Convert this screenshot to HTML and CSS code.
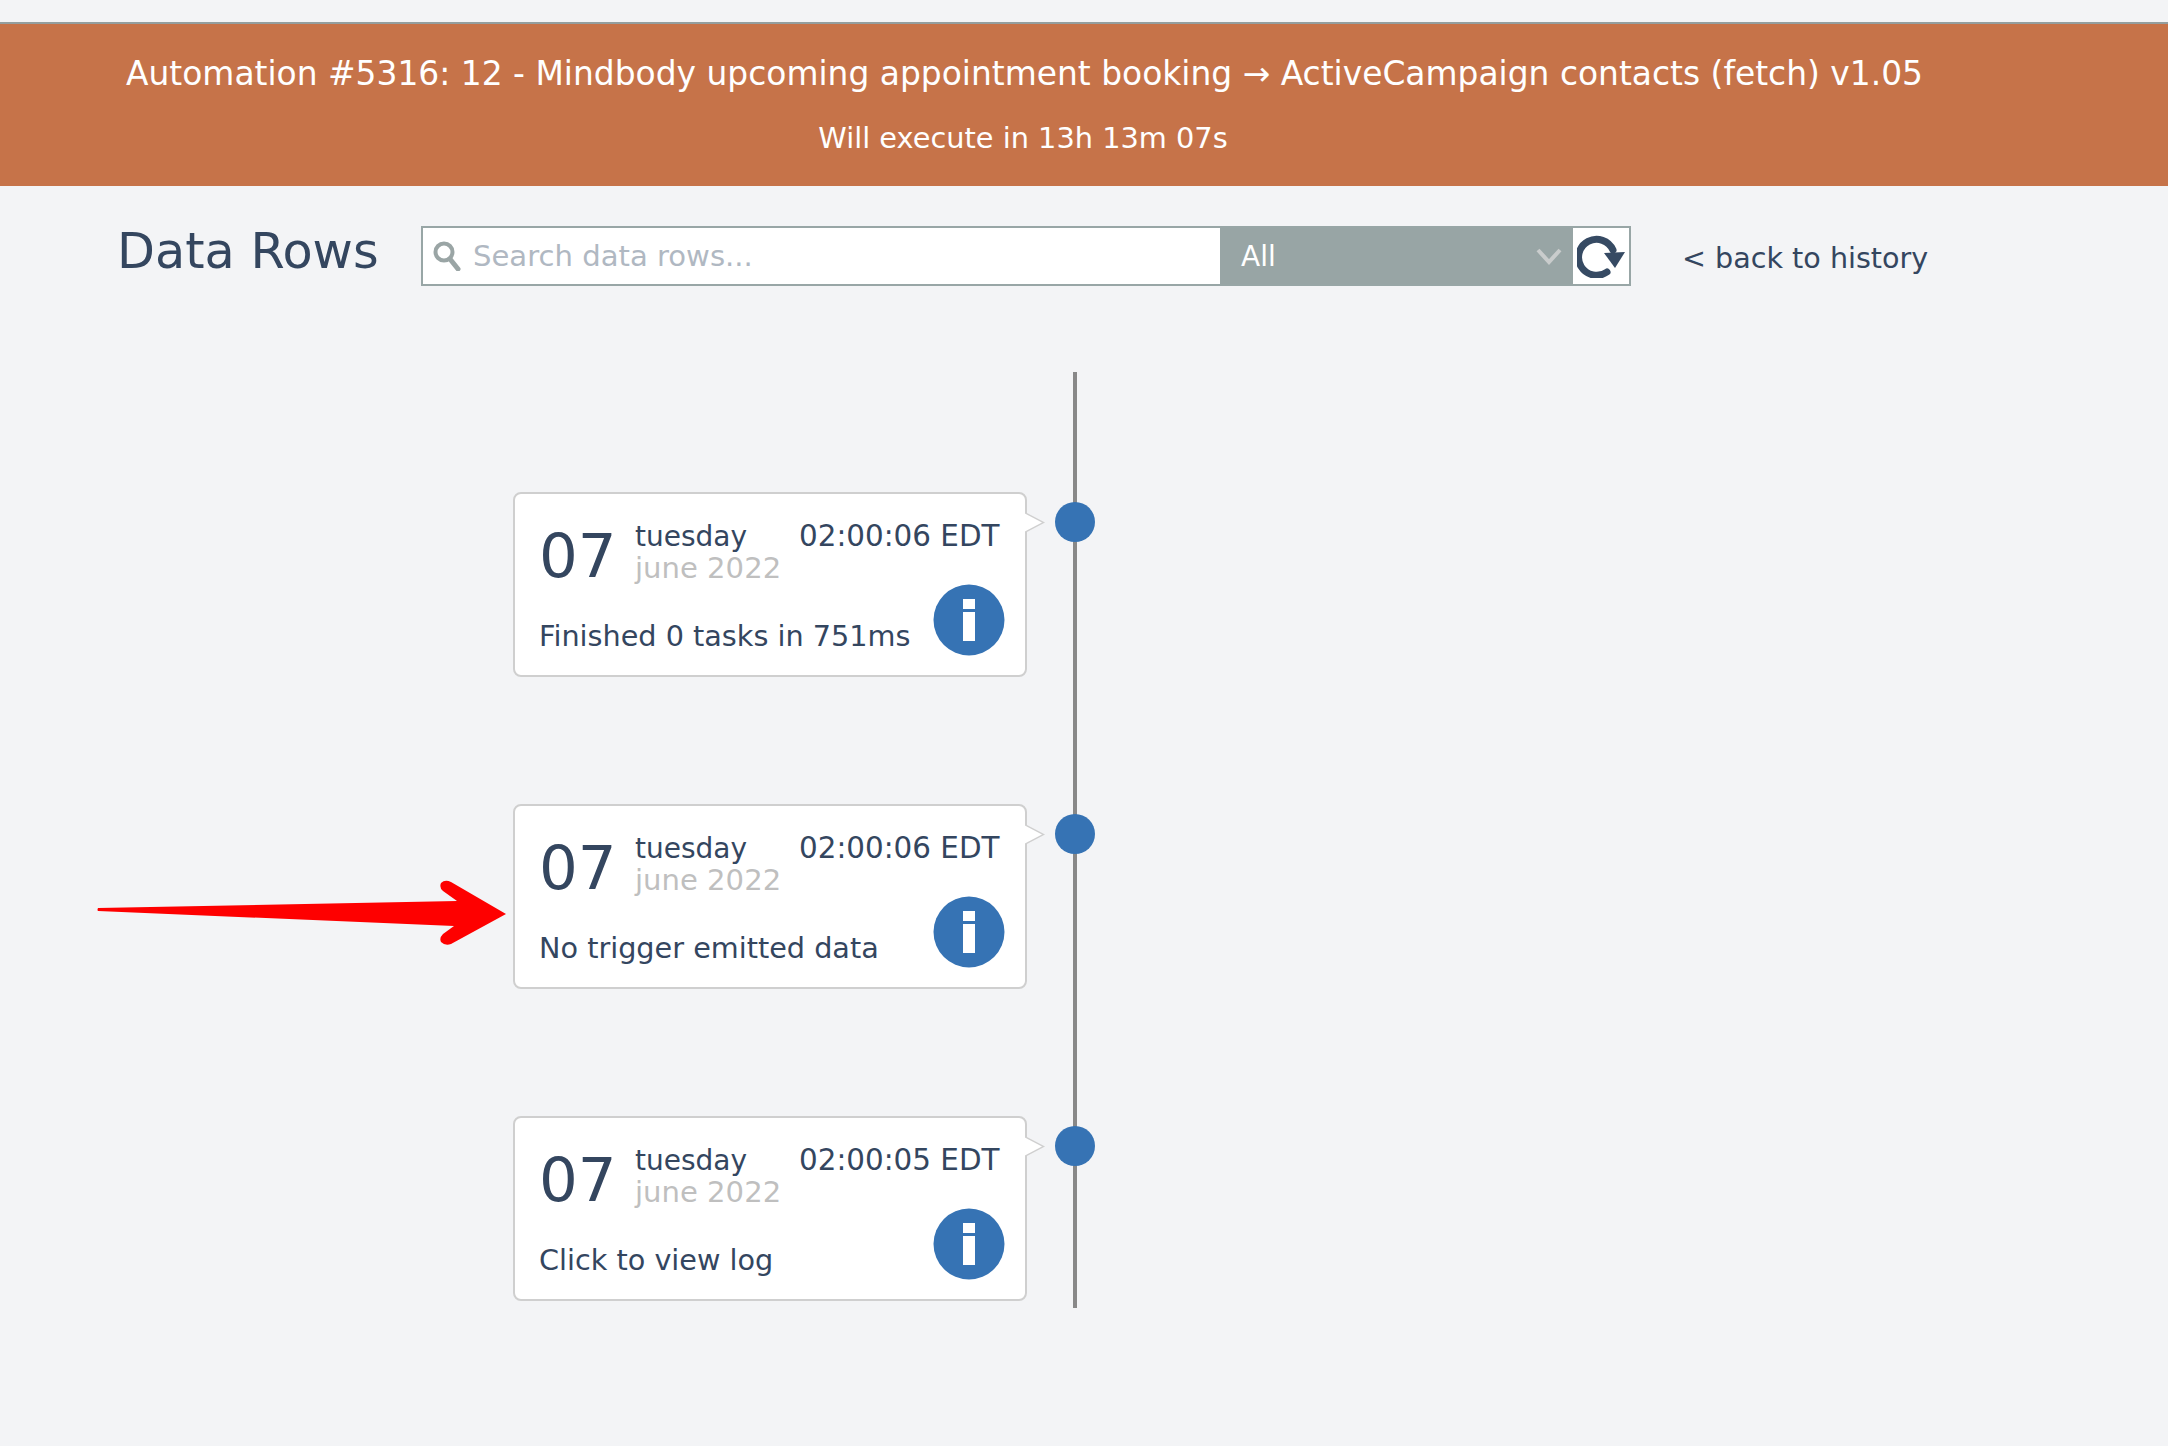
FILE: index.html
```html
<!DOCTYPE html>
<html lang="en">
<head>
<meta charset="utf-8">
<title>Data Rows</title>
<link rel="stylesheet" href="styles.css">
</head>
<body>
<header class="banner">
  <div class="banner-title">Automation #5316: 12 - Mindbody upcoming appointment booking → ActiveCampaign contacts (fetch) v1.05</div>
  <div class="banner-sub">Will execute in 13h 13m 07s</div>
</header>
<section class="toolbar">
  <h1 class="page-title">Data Rows</h1>
  <div class="filter">
    <div class="search">
      <svg class="search-icon" viewBox="0 0 30 30" width="30" height="30"><circle cx="12" cy="11" r="8.5" fill="none" stroke="#9aa5a5" stroke-width="4"/><path d="M18 18 L26 28" stroke="#9aa5a5" stroke-width="5" stroke-linecap="round"/></svg>
      <span class="placeholder">Search data rows...</span>
    </div>
    <div class="select">
      <span>All</span>
      <svg class="chevron" viewBox="0 0 26 18" width="26" height="18"><path d="M2 3 L13 15 L24 3" fill="none" stroke="#c9cccc" stroke-width="4"/></svg>
    </div>
    <div class="refresh">
      <svg viewBox="0 0 48 44" width="48" height="44"><path d="M30 38 A18 18 0 1 1 36 16" fill="none" stroke="#364a63" stroke-width="7" stroke-linecap="round"/><path d="M27 19 L48 18 L38 34 Z" fill="#364a63"/></svg>
    </div>
  </div>
  <a class="back" href="#">&lt; back to history</a>
</section>
<main class="timeline">
  <article class="item">
    <div class="card">
      <div class="card-top">
        <div class="day">07</div>
        <div class="date"><div class="weekday">tuesday</div><div class="month">june 2022</div></div>
        <div class="time">02:00:06 EDT</div>
      </div>
      <div class="card-bottom">
        <div class="msg">Finished 0 tasks in 751ms</div>
        <svg class="info" viewBox="0 0 72 72" width="72" height="72"><circle cx="36" cy="36" r="35.5" fill="#3673b4"/><rect x="30" y="15" width="12" height="10" fill="#fff"/><rect x="30" y="28" width="12" height="29" fill="#fff"/></svg>
      </div>
    </div>
    <div class="dot"></div>
  </article>
  <article class="item">
    <div class="card">
      <div class="card-top">
        <div class="day">07</div>
        <div class="date"><div class="weekday">tuesday</div><div class="month">june 2022</div></div>
        <div class="time">02:00:06 EDT</div>
      </div>
      <div class="card-bottom">
        <div class="msg">No trigger emitted data</div>
        <svg class="info" viewBox="0 0 72 72" width="72" height="72"><circle cx="36" cy="36" r="35.5" fill="#3673b4"/><rect x="30" y="15" width="12" height="10" fill="#fff"/><rect x="30" y="28" width="12" height="29" fill="#fff"/></svg>
      </div>
    </div>
    <div class="dot"></div>
  </article>
  <article class="item">
    <div class="card">
      <div class="card-top">
        <div class="day">07</div>
        <div class="date"><div class="weekday">tuesday</div><div class="month">june 2022</div></div>
        <div class="time">02:00:05 EDT</div>
      </div>
      <div class="card-bottom">
        <div class="msg">Click to view log</div>
        <svg class="info" viewBox="0 0 72 72" width="72" height="72"><circle cx="36" cy="36" r="35.5" fill="#3673b4"/><rect x="30" y="15" width="12" height="10" fill="#fff"/><rect x="30" y="28" width="12" height="29" fill="#fff"/></svg>
      </div>
    </div>
    <div class="dot"></div>
  </article>
</main>
<svg class="annotation" viewBox="0 0 430 80" width="430" height="80"><path d="M1 28 Q0 30 1 31 L357 46 L346 54 Q342 58 344 62 Q348 66 354 64 L409 34 L354 2 Q348 -1 344 3 Q342 8 346 11 L360 21 Z" fill="#fe0000"/></svg>
</body>
</html>
```
FILE: styles.css
```css
* { box-sizing: border-box; }
html, body { margin: 0; padding: 0; }
body {
  position: relative;
  min-height: 1446px;
  padding-top: 22px;
  background: #f3f4f6;
  color: #34465f;
  font-family: "DejaVu Sans", Verdana, sans-serif;
  overflow: hidden;
}
.banner {
  height: 164px;
  border-top: 2px solid #949e9e;
  background: #c67349;
  color: #fff;
  padding-left: 126px;
  width: 2168px;
}
.banner-title {
  width: 1794px;
  padding-top: 27px;
  font-size: 32.9px;
  line-height: 46px;
  text-align: center;
  white-space: nowrap;
}
.banner-sub {
  width: 1794px;
  padding-top: 22px;
  font-size: 28.8px;
  line-height: 38px;
  text-align: center;
}
.toolbar {
  display: flex;
  align-items: flex-start;
  padding: 40px 0 0 117px;
}
.page-title {
  width: 304px;
  margin: -5px 0 0;
  font-size: 49.3px;
  font-weight: 400;
  line-height: 60px;
}
.filter {
  display: flex;
  width: 1210px;
  height: 60px;
  border: 2px solid #98a6a6;
  background: #fff;
}
.search {
  display: flex;
  align-items: center;
  width: 797px;
  padding-left: 9px;
  gap: 11px;
}
.placeholder { color: #b0b8c2; font-size: 29.1px; }
.select {
  display: flex;
  align-items: center;
  justify-content: space-between;
  width: 353px;
  padding: 0 11px 0 21px;
  background: #98a5a5;
  color: #fff;
  font-size: 28px;
}
.refresh {
  display: flex;
  align-items: center;
  justify-content: center;
  flex: 1;
}
.back {
  margin: 13px 0 0 51px;
  color: #34465f;
  font-size: 28.6px;
  line-height: 38px;
  text-decoration: none;
}
.timeline {
  position: relative;
  display: flex;
  flex-direction: column;
  gap: 127px;
  margin: 86px 0 0 513px;
  padding-top: 120px;
  width: 600px;
}
.timeline::before {
  content: "";
  position: absolute;
  left: 560px;
  top: 0;
  bottom: -7px;
  width: 4px;
  background: #888;
}
.item { position: relative; }
.card {
  position: relative;
  width: 514px;
  height: 185px;
  padding: 27px 0 0 24px;
  background: #fff;
  border: 2px solid #cfcfcf;
  border-radius: 8px;
}
.card::before,
.card::after {
  content: "";
  position: absolute;
  top: 18px;
  width: 20px;
  height: 21px;
  clip-path: polygon(0 0, 100% 50%, 0 100%);
}
.card::before { left: 100%; background: #cfcfcf; }
.card::after { left: calc(100% - 3px); background: #fff; }
.card-top { display: flex; }
.day {
  width: 96px;
  font-size: 61px;
  line-height: 70px;
}
.date { width: 164px; font-size: 28px; line-height: 31px; white-space: nowrap; }
.month { margin-top: 1px; color: #bfbfbf; font-size: 29.1px; }
.time { font-size: 29.4px; line-height: 31px; white-space: nowrap; }
.card-bottom {
  display: flex;
  align-items: flex-start;
  justify-content: space-between;
  padding-right: 20px;
  margin-top: -7px;
}
.msg { padding-top: 33px; font-size: 28.7px; line-height: 38px; white-space: nowrap; }
.dot {
  position: absolute;
  left: 542px;
  top: 10px;
  width: 40px;
  height: 40px;
  border-radius: 50%;
  background: #3673b4;
}
.annotation {
  position: absolute;
  left: 97px;
  top: 880px;
}
```
